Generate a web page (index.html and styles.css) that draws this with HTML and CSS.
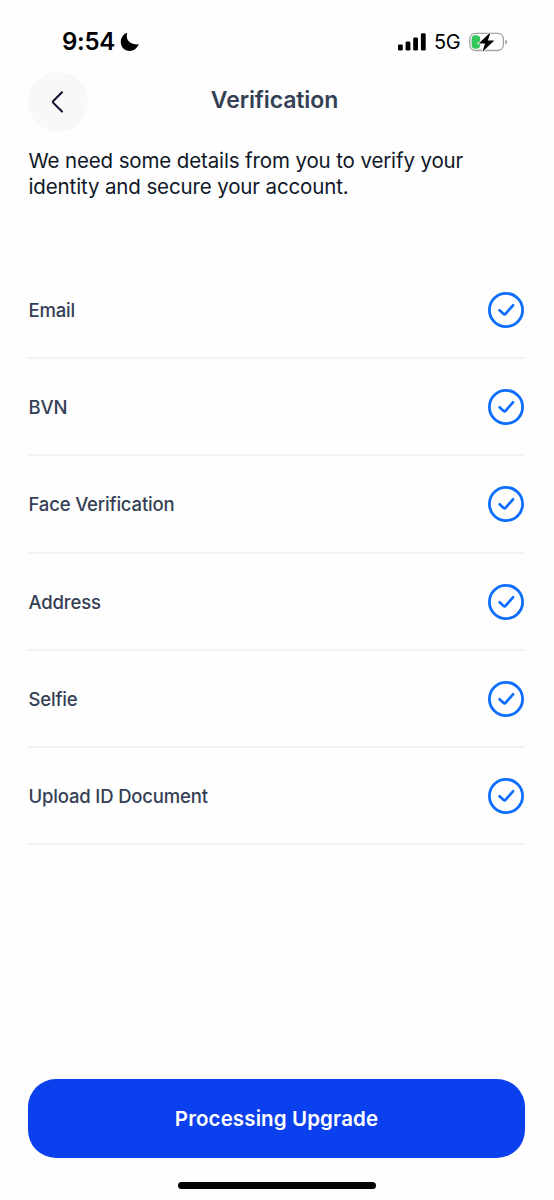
FILE: index.html
```html
<!DOCTYPE html>
<html lang="en">
<head>
<meta charset="utf-8">
<title>Verification</title>
<link rel="stylesheet" href="styles.css">
</head>
<body>
<svg class="defs" width="0" height="0" aria-hidden="true">
  <symbol id="check" viewBox="0 0 38 38">
    <circle cx="19" cy="19" r="16.6" fill="none" stroke="#0d6efd" stroke-width="2.8"/>
    <path d="M12.600 19.300L16.600 22.900Q17.700 23.700 18.700 22.700L26 14.300" fill="none" stroke="#0d6efd" stroke-width="2.700" stroke-linecap="round" stroke-linejoin="round"/>
  </symbol>
</svg>
<div class="screen">
  <div class="status">
    <div class="clock">
      <span class="time">9:54</span>
      <svg width="20" height="20" viewBox="0 0 20 20"><path d="M7.3.8C5.300 6.500 8.500 13.200 18.700 12.300C17 16.500 13.600 19 9.700 19C4.600 19 .8 15.200.8 10C.8 5.700 3.400 2 7.300.8Z" fill="#000"/></svg>
    </div>
    <div class="signals">
      <svg width="28" height="18" viewBox="0 0 28 18"><rect x="0" y="11.500" width="4.800" height="6" rx="1.300"/><rect x="7.600" y="8.500" width="4.800" height="9" rx="1.300"/><rect x="15.200" y="4.500" width="4.800" height="13" rx="1.300"/><rect x="22.900" y="0.300" width="4.800" height="17.200" rx="1.300"/></svg>
      <span class="network">5G</span>
      <svg width="40" height="22" viewBox="0 0 40 22">
        <rect x=".8" y="2.300" width="33.600" height="17.200" rx="5.500" fill="none" stroke="#a4a4a4" stroke-width="1.300"/>
        <path d="M36.200 8.500Q38.400 9.500 38.400 11T36.200 13.500Z" fill="#a4a4a4"/>
        <rect x="2.600" y="4.200" width="8.600" height="13.500" rx="3.700" fill="#34c759"/>
        <path d="M21.500 1.300L9.700 12.400H16L13.500 20.700L25.300 9.600H18.900Z" fill="#000" stroke="#fff" stroke-width="1.600" paint-order="stroke"/>
      </svg>
    </div>
  </div>
  <header class="header">
    <button class="back" aria-label="Back"><svg width="24" height="28" viewBox="0 0 24 28"><path d="M16 4.300L7.300 12.900Q6.400 13.900 7.300 14.900L16 23.600" fill="none" stroke="#13132f" stroke-width="2.100" stroke-linecap="round"/></svg></button>
    <h1 class="title">Verification</h1>
  </header>
  <p class="intro">We need some details from you to verify your<br>identity and secure your account.</p>
  <ul class="steps">
    <li class="step"><span>Email</span><svg class="check"><use href="#check"/></svg></li>
    <li class="step"><span>BVN</span><svg class="check"><use href="#check"/></svg></li>
    <li class="step"><span>Face Verification</span><svg class="check"><use href="#check"/></svg></li>
    <li class="step"><span>Address</span><svg class="check"><use href="#check"/></svg></li>
    <li class="step"><span>Selfie</span><svg class="check"><use href="#check"/></svg></li>
    <li class="step"><span>Upload ID Document</span><svg class="check"><use href="#check"/></svg></li>
  </ul>
  <button class="cta">Processing Upgrade</button>
  <div class="home"></div>
</div>
</body>
</html>
```
FILE: styles.css
```css
* { box-sizing: border-box; }
body { margin: 0; background: #fff; font-family: Inter, "Liberation Sans", sans-serif; }
button { border: 0; padding: 0; font-family: inherit; }
svg { display: block; flex: none; }
.defs { position: absolute; }
.screen { width: 554px; height: 1200px; padding: 0 29px 0 28px; display: flex; flex-direction: column; overflow: hidden; background: #fefefe; }
.status { height: 72px; padding: 11px 16px 0 34px; display: flex; align-items: center; justify-content: space-between; flex: none; }
.clock, .signals { display: flex; align-items: center; }
.clock { gap: 5px; }
.time { font-size: 24px; font-weight: 600; letter-spacing: -0.3px; }
.signals { gap: 8.500px; }
.network { font-size: 20px; letter-spacing: -0.3px; }
.header { height: 60px; flex: none; display: grid; grid-template-columns: 60px 1fr 60px; align-items: center; }
.back { width: 60px; height: 60px; border-radius: 50%; background: #f8f8f8; display: flex; align-items: center; justify-content: center; }
.title { margin: 0; padding: 0 4px 4px 0; font-size: 23px; line-height: 28px; font-weight: 600; letter-spacing: -0.1px; color: #344054; text-align: center; }
.intro { margin: 16px 0 0; padding-left: 0.500px; height: 114px; flex: none; font-size: 20.500px; line-height: 25.500px; letter-spacing: -0.130px; color: #101828; white-space: nowrap; }
.steps { list-style: none; margin: 0; padding: 0; flex: none; }
.step { height: 97.200px; padding: 1px 0.500px 0 0.500px; display: flex; align-items: center; justify-content: space-between; border-bottom: 2px solid #f2f2f3; font-size: 18.500px; font-weight: 500; letter-spacing: -0.170px; color: #344054; }
.check { width: 38px; height: 38px; }
.cta { margin-top: auto; height: 79px; flex: none; border-radius: 28px; background: #0b40ee; color: #fff; font-size: 20.500px; font-weight: 600; letter-spacing: 0.120px; }
.home { width: 198px; height: 7px; margin: 24px auto 11px; flex: none; border-radius: 4px; background: #000; }
```
